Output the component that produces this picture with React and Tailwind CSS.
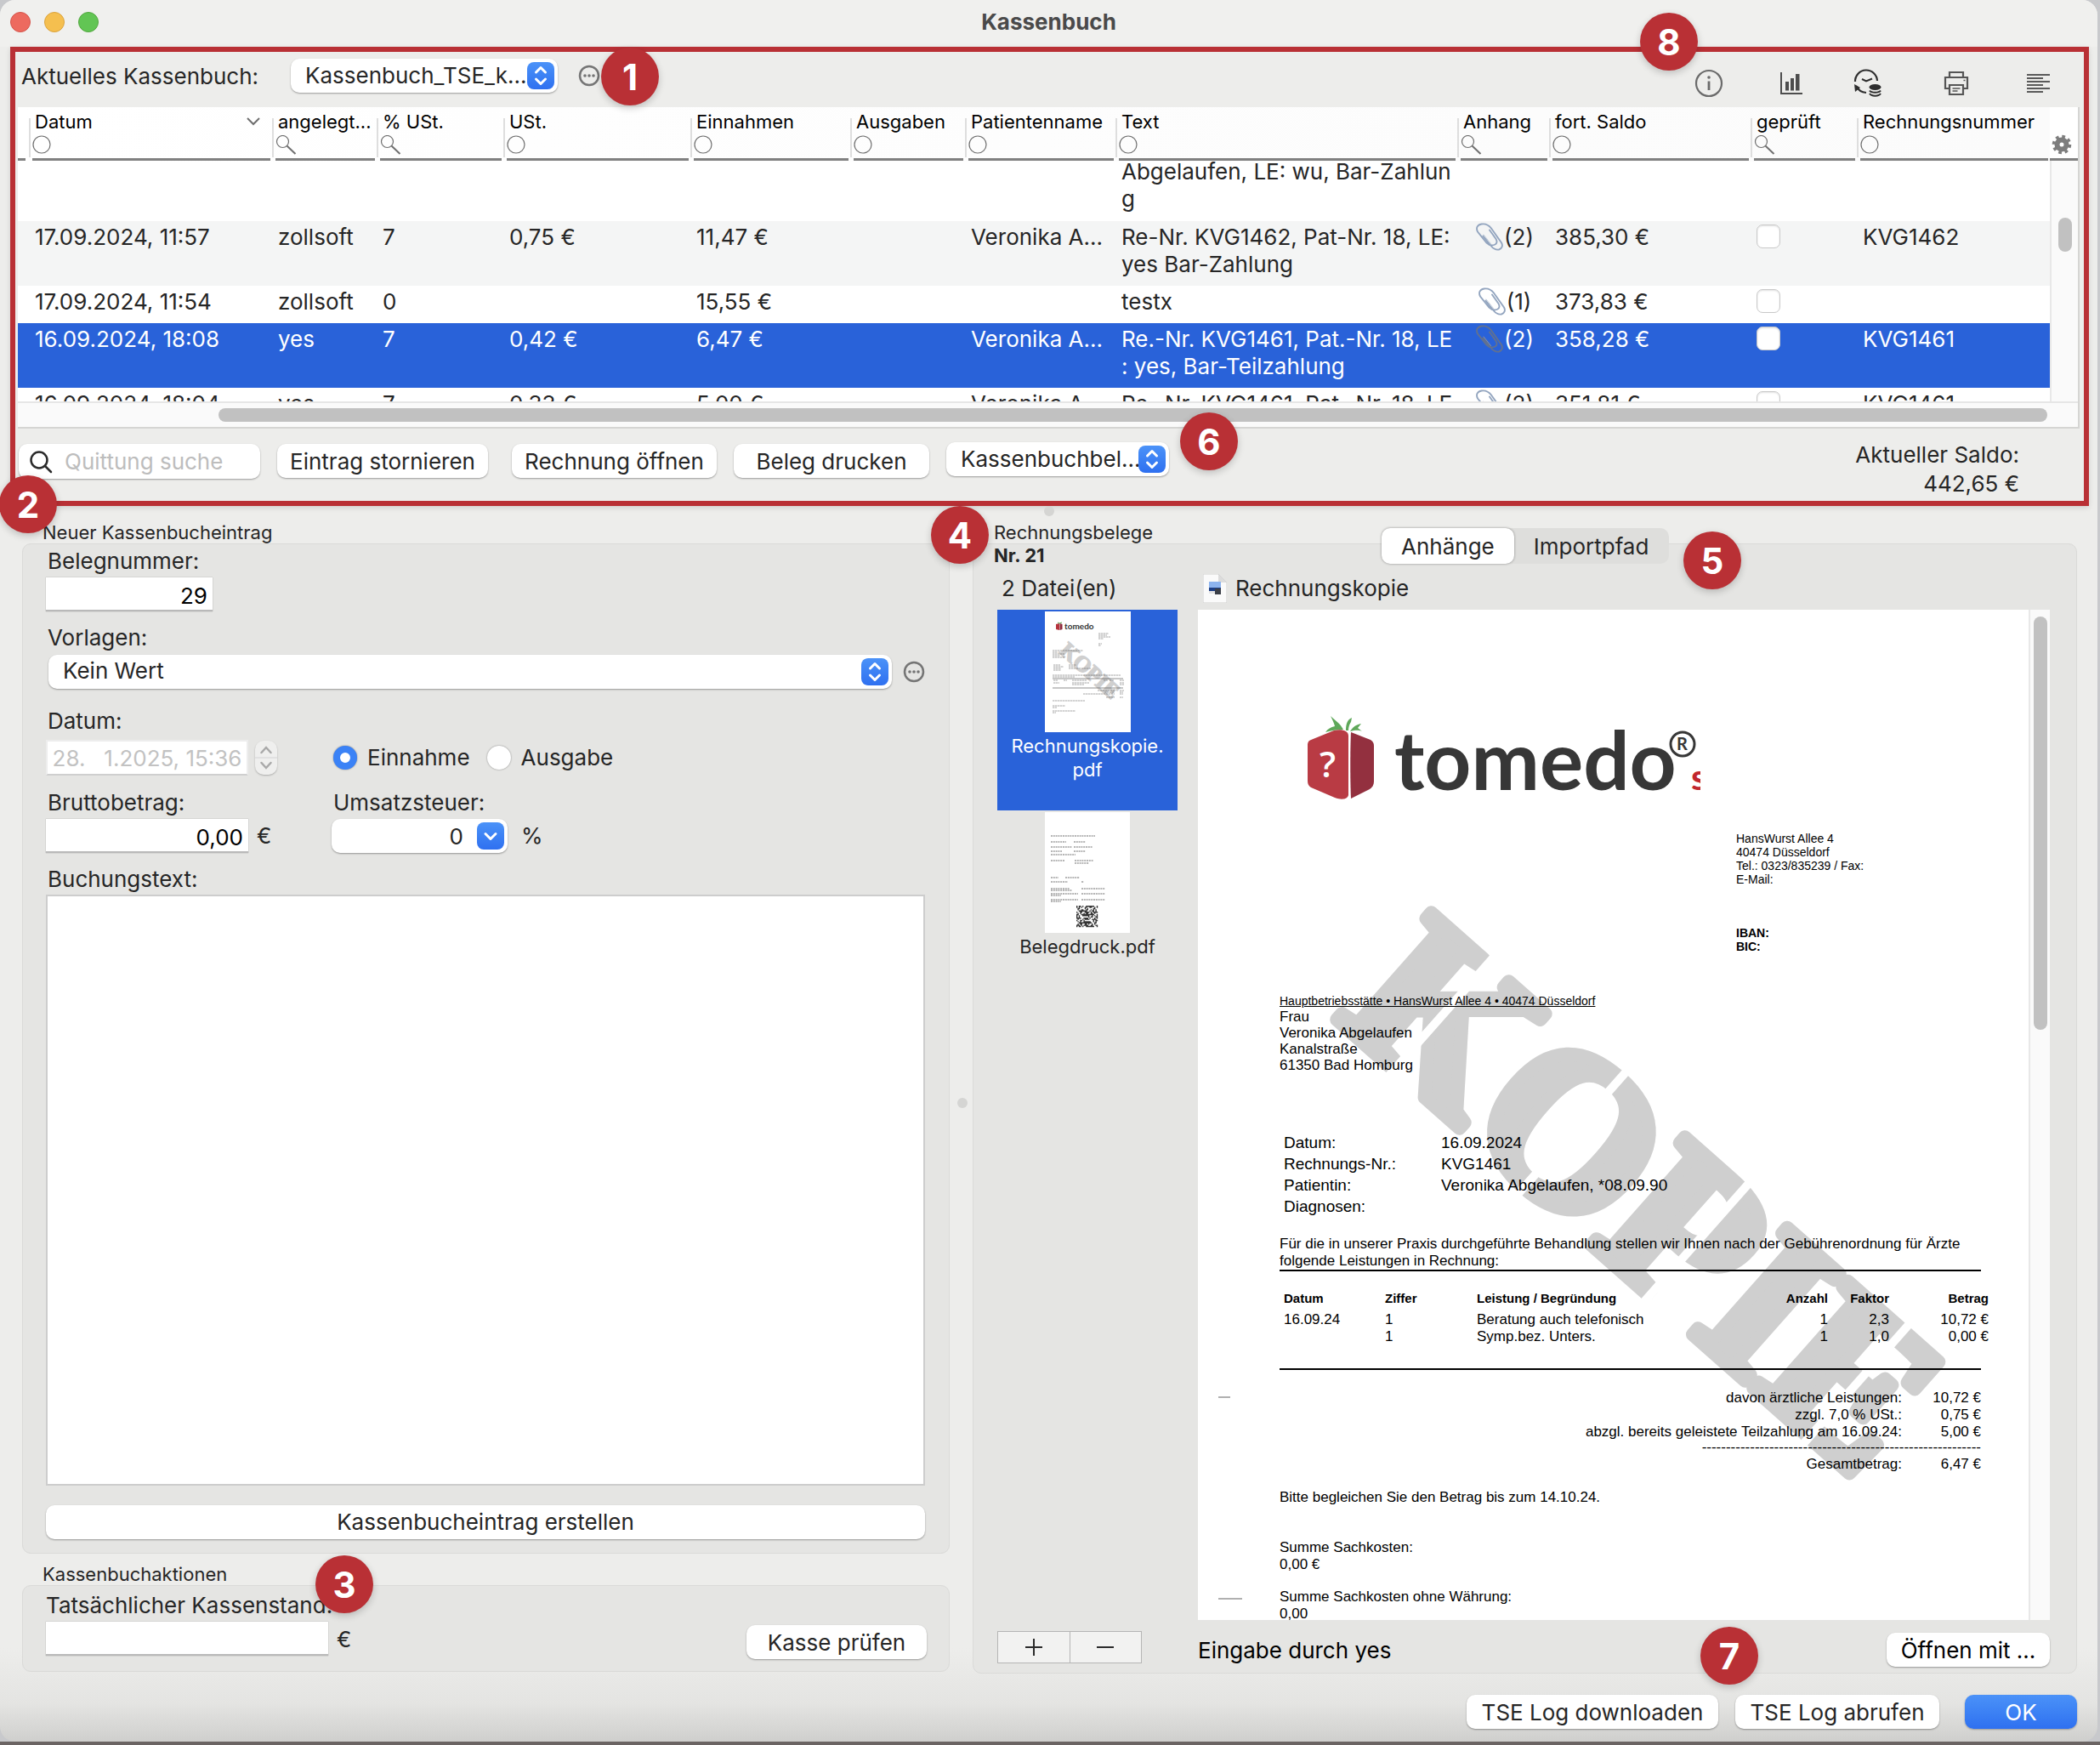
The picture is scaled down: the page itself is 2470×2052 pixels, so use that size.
import React, { useState } from 'react';
import clsx from 'clsx';

const COLUMNS = [
    { key: 'datum', label: 'Datum', width: 'w-[286px]', filter: 'circle', sorted: true },
    { key: 'angelegt', label: 'angelegt...', width: 'w-[123px]', filter: 'search' },
    { key: 'ustProzent', label: '% USt.', width: 'w-[149px]', filter: 'search' },
    { key: 'ust', label: 'USt.', width: 'w-[220px]', filter: 'circle' },
    { key: 'einnahmen', label: 'Einnahmen', width: 'w-[188px]', filter: 'circle' },
    { key: 'ausgaben', label: 'Ausgaben', width: 'w-[135px]', filter: 'circle' },
    { key: 'patient', label: 'Patientenname', width: 'w-[177px]', filter: 'circle' },
    { key: 'text', label: 'Text', width: '', filter: 'circle' },
    { key: 'anhang', label: 'Anhang', width: 'w-[108px]', filter: 'search' },
    { key: 'saldo', label: 'fort. Saldo', width: 'w-[237px]', filter: 'circle' },
    { key: 'geprueft', label: 'geprüft', width: 'w-[125px]', filter: 'search' },
    { key: 'rechnung', label: 'Rechnungsnummer', width: 'w-[227px]', filter: 'circle' },
];

const ENTRIES = [
    { id: 1, text: ['Abgelaufen, LE: wu, Bar-Zahlun', 'g'], height: 'h-[70px]', partial: true },
    { id: 2, datum: '17.09.2024, 11:57', angelegt: 'zollsoft', ustProzent: '7', ust: '0,75 €', einnahmen: '11,47 €', patient: 'Veronika A...', text: ['Re-Nr. KVG1462, Pat-Nr. 18, LE:', 'yes Bar-Zahlung'], anhang: 2, saldo: '385,30 €', rechnung: 'KVG1462', height: 'h-[76px]', striped: true },
    { id: 3, datum: '17.09.2024, 11:54', angelegt: 'zollsoft', ustProzent: '0', einnahmen: '15,55 €', text: ['testx'], anhang: 1, saldo: '373,83 €', height: 'h-[44px]' },
    { id: 4, datum: '16.09.2024, 18:08', angelegt: 'yes', ustProzent: '7', ust: '0,42 €', einnahmen: '6,47 €', patient: 'Veronika A...', text: ['Re.-Nr. KVG1461, Pat.-Nr. 18, LE', ': yes, Bar-Teilzahlung'], anhang: 2, saldo: '358,28 €', rechnung: 'KVG1461', height: 'h-[76px]', selected: true },
    { id: 5, datum: '16.09.2024, 18:04', angelegt: 'yes', ustProzent: '7', ust: '0,33 €', einnahmen: '5,00 €', patient: 'Veronika A...', text: ['Re.-Nr. KVG1461, Pat.-Nr. 18, LE'], anhang: 2, saldo: '351,81 €', rechnung: 'KVG1461', height: 'h-[44px]' },
];

const INVOICE_ITEMS = [
    { datum: '16.09.24', ziffer: '1', leistung: 'Beratung auch telefonisch', anzahl: '1', faktor: '2,3', betrag: '10,72 €' },
    { datum: '', ziffer: '1', leistung: 'Symp.bez. Unters.', anzahl: '1', faktor: '1,0', betrag: '0,00 €' },
];

const INVOICE_HEAD = [
    ['Datum:', '16.09.2024'],
    ['Rechnungs-Nr.:', 'KVG1461'],
    ['Patientin:', 'Veronika Abgelaufen, *08.09.90'],
    ['Diagnosen:', ''],
];

const INVOICE_SUMS = [
    ['davon ärztliche Leistungen:', '10,72 €'],
    ['zzgl. 7,0 % USt.:', '0,75 €'],
    ['abzgl. bereits geleistete Teilzahlung am 16.09.24:', '5,00 €'],
];

/* ---------- small building blocks ---------- */

function Marker({ n, className }) {
    return (
        <span className={clsx('absolute z-20 flex size-[68px] items-center justify-center rounded-full bg-[#b93035] text-[42px] font-bold text-white shadow-[0_3px_8px_rgba(0,0,0,0.2)]', className)}>
            {n}
        </span>
    );
}

function PushButton({ children, className }) {
    return (
        <button type="button" className={clsx('h-10 rounded-[10px] bg-white text-center shadow-[0_1px_2px_rgba(0,0,0,0.35)]', className)}>
            {children}
        </button>
    );
}

function BlueKnob({ down }) {
    return (
        <svg viewBox="0 0 32 32" className="pointer-events-none absolute top-1 right-1 size-8 rounded-[8px] bg-linear-to-b from-[#4b92f8] to-[#2f70f0]" fill="none" stroke="#fff" strokeWidth="3" strokeLinecap="round" strokeLinejoin="round">
            {down ? <path d="M10 13.5l6 6 6-6" /> : <path d="M10.500 12l5.500-5.500 5.500 5.500M10.500 20l5.500 5.500 5.500-5.500" />}
        </svg>
    );
}

function PopUp({ id, label, value, className }) {
    return (
        <span className={clsx('relative block h-10', className)}>
            <select id={id} aria-label={label} className="block h-full w-full appearance-none rounded-[10px] bg-white pb-0.5 pl-[17px] shadow-[0_1px_2px_rgba(0,0,0,0.35)]">
                <option>{value}</option>
            </select>
            <BlueKnob />
        </span>
    );
}

function MoreButton({ label }) {
    return (
        <button type="button" aria-label={label} className="size-[26px] shrink-0">
            <svg viewBox="0 0 26 26" className="size-full">
                <circle cx="13" cy="13" r="11" fill="none" stroke="#757575" strokeWidth="2.500" />
                <circle cx="8" cy="13" r="1.800" fill="#757575" />
                <circle cx="13" cy="13" r="1.800" fill="#757575" />
                <circle cx="18" cy="13" r="1.800" fill="#757575" />
            </svg>
        </button>
    );
}

function FilterIcon({ kind }) {
    return (
        <svg viewBox="0 0 26 24" className="mt-1 h-6 w-[26px]" fill="none" stroke="#6f6f6f">
            {kind === 'circle' ? (
                <circle cx="11" cy="11" r="10" strokeWidth="1.200" />
            ) : (
                <>
                    <circle cx="8.500" cy="7.500" r="7" strokeWidth="1.200" />
                    <path d="M13.500 12.500L23.500 22" strokeWidth="2" />
                </>
            )}
        </svg>
    );
}

function PaperClip({ dark }) {
    return (
        <svg viewBox="0 0 34 34" className="size-[34px] shrink-0" fill="none" stroke={dark ? '#62718f' : '#93a5bf'} strokeWidth="1.900" strokeLinecap="round">
            <path d="M9.500 15.500L19 27.500c2.500 3 5.500 4.500 9 4 3.500-1 5-4.500 3-8L19 6.500C16 2.500 12 .800 7.500 1.500 2.500 2.500.800 6 3 10.500l10.500 13c3 3 7 3.500 10 2 2.500-1.500 2.500-4 1-6.500L17 8.500" />
            <path d="M10 14l8.500 10.500" stroke={dark ? '#8b93a3' : '#c3cddb'} strokeWidth="1" />
        </svg>
    );
}

/* ---------- toolbar icons ---------- */

function InfoIcon() {
    return (
        <svg viewBox="0 0 34 34" className="size-[34px]" fill="none" stroke="#6b6b6b">
            <circle cx="17" cy="17" r="15" strokeWidth="2.200" />
            <path d="M17 14.500V25" strokeWidth="2.800" />
            <circle cx="17" cy="10" r="1.800" fill="#6b6b6b" stroke="none" />
        </svg>
    );
}

function ChartIcon() {
    return (
        <svg viewBox="0 0 28 28" className="size-7" fill="#4d4d4d">
            <path d="M1 1h2v24h24v2H1zM7 12h4v10.500H7zM13 8h4v14.500h-4zM19 3h4.500v19.500H19z" />
        </svg>
    );
}

function ClockCoinsIcon() {
    return (
        <svg viewBox="0 0 48 34" className="h-[34px] w-12" fill="none" stroke="#2e2e2e" strokeWidth="2.200">
            <path d="M2 15a13 13 0 0 1 26-1" />
            <path d="M3 20c2.500 5 6.500 7.500 12 8" />
            <path d="M1 18l1 9 6-5z" fill="#2e2e2e" stroke="none" />
            <path d="M10 12l5 2.500 7-3" strokeWidth="2" />
            <ellipse cx="25.500" cy="21.500" rx="7" ry="3.500" fill="#2e2e2e" stroke="none" />
            <path d="M19 25.500c2 3 11 3 13 0M19 29c2 3.500 11 3.500 13 0" strokeWidth="2" />
        </svg>
    );
}

function PrinterIcon() {
    return (
        <svg viewBox="0 0 30 30" className="size-[30px]" fill="none" stroke="#555" strokeWidth="2.200">
            <path d="M7 8V2h16v6M7 21H2V8h26v13h-5" />
            <path d="M7 17h16v11H7z" />
            <path d="M10.500 21h9M10.500 24h6" strokeWidth="1.400" />
            <path d="M23.500 11.500h2" strokeWidth="1.500" />
        </svg>
    );
}

function LinesIcon() {
    return (
        <svg viewBox="0 0 28 24" className="h-6 w-7" stroke="#5a5a5a" strokeWidth="1.800">
            <path d="M0 2h27M0 6h19M0 10h27M0 14h19M0 18h27M0 22h19" />
        </svg>
    );
}

const TOOLBAR = [
    { label: 'Info', icon: InfoIcon },
    { label: 'Statistik', icon: ChartIcon },
    { label: 'Kassenverlauf', icon: ClockCoinsIcon },
    { label: 'Drucken', icon: PrinterIcon },
    { label: 'Protokoll', icon: LinesIcon },
];

/* ---------- upper part: the cash book list ---------- */

function EntryCell({ column, entry }) {
    if (column.key === 'text') {
        return (
            <div className={clsx(entry.partial && '-mt-1')}>
                {entry.text.map((line) => <div key={line}>{line}</div>)}
            </div>
        );
    }
    if (column.key === 'anhang') {
        return entry.anhang ? (
            <div className="flex h-8 items-center justify-center pr-1">
                <PaperClip dark={entry.selected} />
                <span>({entry.anhang})</span>
            </div>
        ) : null;
    }
    if (column.key === 'geprueft') {
        return entry.partial ? null : (
            <input type="checkbox" aria-label={`geprüft ${entry.datum}`} className="mt-px block size-7 appearance-none rounded-[7px] border border-[#c9c9c9] bg-white shadow-[inset_0_1px_2px_rgba(0,0,0,0.12)] checked:bg-[#2f70f0]" />
        );
    }
    return entry[column.key] || null;
}

function EntryTable() {
    return (
        <div className="mr-[5px] ml-[3px] flex h-[378px] flex-col border-r-2 border-b-2 border-[#d5d5d3] bg-white">
            <div className="flex h-[346px]">
                <div className="min-w-0 flex-1 overflow-hidden">
                    <table className="w-full table-fixed border-collapse whitespace-nowrap">
                        <thead>
                            <tr className="h-16 bg-linear-to-r from-white to-[#fbfbfb] text-left text-black">
                                <th className="w-[13px] p-0 align-top" aria-label="Status">
                                    <div className="mr-1 h-[63px] border-b-[3px] border-[#808080]" />
                                </th>
                                {COLUMNS.map((column) => (
                                    <th key={column.key} className={clsx('relative p-0 align-top text-[22px] font-normal before:absolute before:top-[13px] before:left-0 before:h-[46px] before:w-0.5 before:bg-[#dedede]', column.width)}>
                                        <div className="mr-0.5 ml-1 h-[63px] border-b-[3px] border-[#808080] pt-[5px]">
                                            <div className="flex items-center justify-between pl-[3px] leading-6">
                                                {column.label}
                                                {column.sorted && (
                                                    <svg viewBox="0 0 16 10" className="mr-3 h-2.5 w-4" fill="none" stroke="#6f6f6f" strokeWidth="2">
                                                        <path d="M1 1l7 7 7-7" />
                                                    </svg>
                                                )}
                                            </div>
                                            <FilterIcon kind={column.filter} />
                                        </div>
                                    </th>
                                ))}
                            </tr>
                        </thead>
                        <tbody>
                            {ENTRIES.map((entry) => (
                                <tr key={entry.id} className={clsx('leading-8', entry.height, entry.striped && 'bg-[#f4f5f5]', entry.selected && 'bg-[#2962d9] text-white')}>
                                    <td className="p-0" />
                                    {COLUMNS.map((column) => (
                                        <td key={column.key} className={clsx('p-0 pl-[7px] align-top', entry.partial ? 'pt-0' : 'pt-[3px]')}>
                                            <EntryCell column={column} entry={entry} />
                                        </td>
                                    ))}
                                </tr>
                            ))}
                        </tbody>
                    </table>
                </div>
                <div className="flex w-[33px] flex-col">
                    <button type="button" aria-label="Spalten" className="flex h-[63px] items-end justify-center border-b-[3px] border-[#808080] pr-1.5 pb-1">
                        <svg viewBox="0 0 24 24" className="size-6" fill="none" stroke="#7d7d7d">
                            <circle cx="12" cy="12" r="5.500" strokeWidth="6" />
                            <circle cx="12" cy="12" r="9.500" strokeWidth="3.500" strokeDasharray="3.700 3.760" />
                        </svg>
                    </button>
                    <div className="flex-1 border-l-2 border-[#e8e8e8] bg-[#fafafa] pt-[67px]">
                        <div className="mx-auto h-10 w-4 rounded-full bg-[#c1c1c1]" />
                    </div>
                </div>
            </div>
            <div className="flex-1 border-t-2 border-[#e6e6e6] bg-[#fafafa] pt-1.5 pr-9 pl-[236px]">
                <div className="h-4 rounded-full bg-[#c1c1c1]" />
            </div>
        </div>
    );
}

function CashBookSection() {
    return (
        <section className="relative mr-[10px] ml-3 h-[540px] border-[6px] border-[#b93035] shadow-[0_2px_6px_rgba(0,0,0,0.12)]">
            <div className="flex h-[65px] items-start justify-between">
                <div className="flex items-center gap-6 pt-2 pl-[7px]">
                    <label className="w-[293px]" htmlFor="kassenbuch">Aktuelles Kassenbuch:</label>
                    <PopUp id="kassenbuch" value="Kassenbuch_TSE_k..." className="w-[314px]" />
                    <MoreButton label="Kassenbuch verwalten" />
                </div>
                <div className="flex gap-[30px] pt-1 pr-5">
                    {TOOLBAR.map(({ label, icon: Icon }) => (
                        <button key={label} type="button" aria-label={label} className="flex h-[66px] w-[67px] items-center justify-center">
                            <Icon />
                        </button>
                    ))}
                </div>
            </div>
            <EntryTable />
            <div className="flex items-start pt-[18px] pr-[76px] pl-1">
                <label className="flex h-[41px] w-[284px] items-center rounded-[10px] bg-white pl-3 shadow-[0_1px_2px_rgba(0,0,0,0.35)]">
                    <svg viewBox="0 0 28 28" className="size-7 shrink-0" fill="none" stroke="#2b2b2b" strokeWidth="2.500" strokeLinecap="round">
                        <circle cx="12" cy="12" r="9.500" />
                        <path d="M19 19l7 7" />
                    </svg>
                    <input type="search" aria-label="Quittung suche" placeholder="Quittung suche" className="ml-3.5 w-full min-w-0 bg-transparent outline-none placeholder:text-[#bdbdbd]" />
                </label>
                <PushButton className="ml-5 w-[248px]">Eintrag stornieren</PushButton>
                <PushButton className="ml-7 w-[241px]">Rechnung öffnen</PushButton>
                <PushButton className="ml-5 w-[230px]">Beleg drucken</PushButton>
                <PopUp label="Belegart" value="Kassenbuchbel..." className="-mt-0.5 ml-5 w-[262px]" />
                <div className="-mt-1 ml-auto text-right leading-[34px]">
                    Aktueller Saldo:
                    <br />
                    442,65 €
                </div>
            </div>
            <Marker n={1} className="-top-[5px] left-[689px]" />
            <Marker n={8} className="-top-[46px] right-[454px]" />
            <Marker n={6} className="top-[424px] left-[1370px]" />
            <Marker n={2} className="top-[498px] -left-[19px]" />
        </section>
    );
}

/* ---------- lower left: new entry form ---------- */

const FIELD = 'h-10 border-b-2 border-[#b9b9b9] bg-white pt-1 pr-1.5 text-right text-black shadow-[0_0_1px_rgba(0,0,0,0.4)] outline-none';

function NewEntryForm() {
    const [kind, setKind] = useState('Einnahme');

    return (
        <form className="flex min-h-0 flex-1 flex-col rounded-[10px] border border-[#dadad8] bg-[#e5e5e3] pt-[5px] pr-7 pb-4 pl-[27px] leading-[30px]">
            <label htmlFor="beleg" className="pl-0.5">Belegnummer:</label>
            <input id="beleg" defaultValue="29" className={clsx(FIELD, 'mt-1 w-[196px]')} />

            <label htmlFor="vorlagen" className="mt-4 pl-0.5">Vorlagen:</label>
            <div className="mt-[5px] flex items-center gap-[13px] pl-[3px]">
                <PopUp id="vorlagen" value="Kein Wert" className="min-w-0 flex-1" />
                <MoreButton label="Vorlagen verwalten" />
            </div>

            <label htmlFor="datum" className="mt-[23px] pl-0.5">Datum:</label>
            <div className="mt-[7px] flex items-center">
                <input id="datum" disabled defaultValue="28.   1.2025, 15:36" className="h-[42px] w-[238px] border-2 border-[#ededed] border-b-[#cfcfcf] bg-white text-center whitespace-pre text-[#c2c2c2]" />
                <button type="button" disabled aria-label="Datum ändern" className="ml-2 h-10 w-[26px] rounded-[10px] bg-[#efefee] shadow-[0_1px_2px_rgba(0,0,0,0.25)]">
                    <svg viewBox="0 0 26 40" className="size-full" fill="none" stroke="#a9a9a9" strokeWidth="2.500" strokeLinecap="round">
                        <path d="M7.500 14l5.500-6 5.500 6M7.500 26l5.500 6 5.500-6" />
                        <path d="M0 20h26" stroke="#dcdcdc" strokeWidth="1.500" />
                    </svg>
                </button>
                <div className="ml-[66px] flex gap-5">
                    {['Einnahme', 'Ausgabe'].map((name) => (
                        <label key={name} className="flex items-center gap-3">
                            <input
                                type="radio"
                                name="art"
                                checked={kind === name}
                                onChange={() => setKind(name)}
                                className="size-7 appearance-none rounded-full bg-white shadow-[0_0_2px_rgba(0,0,0,0.45)] checked:border-8 checked:border-[#3b82f6]"
                            />
                            {name}
                        </label>
                    ))}
                </div>
            </div>

            <div className="mt-[17px] flex">
                <div className="flex w-[336px] flex-col">
                    <label htmlFor="brutto" className="pl-0.5">Bruttobetrag:</label>
                    <div className="mt-1 flex items-center gap-2.5">
                        <input id="brutto" defaultValue="0,00" className={clsx(FIELD, 'w-[238px]')} />€
                    </div>
                </div>
                <div className="flex flex-col">
                    <label htmlFor="ust" className="pl-0.5">Umsatzsteuer:</label>
                    <div className="mt-1 flex items-center gap-4">
                        <span className="relative block">
                            <input id="ust" defaultValue="0" className="h-10 w-[207px] rounded-[10px] bg-white pr-[52px] text-right shadow-[0_1px_2px_rgba(0,0,0,0.35)]" />
                            <BlueKnob down />
                        </span>
                        %
                    </div>
                </div>
            </div>

            <label htmlFor="text" className="mt-4 pl-0.5">Buchungstext:</label>
            <textarea id="text" className="mt-[3px] min-h-0 flex-1 resize-none border-2 border-[#cdcdcd] bg-white outline-none" />
            <PushButton className="mt-[23px] shrink-0">Kassenbucheintrag erstellen</PushButton>
        </form>
    );
}

function CashActions() {
    return (
        <form className="relative flex items-end justify-between rounded-[10px] border border-[#dadad8] bg-[#e5e5e3] pt-2 pr-[26px] pb-3.5 pl-[27px]">
            <div className="flex flex-col pb-1">
                <label htmlFor="stand" className="leading-[30px]">Tatsächlicher Kassenstand:</label>
                <div className="mt-1 flex items-center gap-2.5">
                    <input id="stand" className={clsx(FIELD, 'w-[332px]')} />€
                </div>
            </div>
            <PushButton className="w-[212px]">Kasse prüfen</PushButton>
            <Marker n={3} className="-top-[36px] left-[344px]" />
        </form>
    );
}

/* ---------- lower right: attachments ---------- */

// text lines of the first thumbnail: [x, y, width]
const THUMB_LINES = [
    [63, 26, 12], [63, 28, 10], [63, 30, 14], [63, 32, 6], [63, 38, 4], [63, 40, 3],
    [9, 46, 36], [9, 48, 6], [9, 50, 14], [9, 52, 9], [9, 54, 14],
    [10, 63, 8], [28, 63, 9], [10, 65, 12], [28, 65, 7], [10, 67, 9], [28, 67, 26], [10, 69, 9],
    [9, 75, 80], [9, 77, 26], [10, 81, 5], [22, 81, 4], [32, 81, 17], [69, 81, 5], [76, 81, 5], [88, 81, 5],
    [10, 84, 7], [32, 84, 20], [88, 84, 5], [32, 86, 14], [88, 86, 5],
    [62, 93, 20], [88, 93, 5], [70, 95, 12], [88, 95, 4], [45, 97, 37], [88, 97, 4], [72, 101, 10], [88, 101, 4],
    [9, 105, 38], [9, 111, 15], [9, 113, 5], [9, 117, 27], [9, 119, 4],
];

function InvoiceThumb() {
    return (
        <svg viewBox="0 0 101 142" className="h-[142px] w-[101px] bg-white">
            <path d="M13 15l4-1v8l-4-1z" fill="#b5333c" />
            <path d="M17.500 14l3 1v6l-3 1z" fill="#8e2a3c" />
            <path d="M15 13l2 1 3-1" stroke="#5fa85a" fill="none" />
            <text x="23" y="21" fontFamily="Lato" fontWeight="700" fontSize="10" fill="#333">tomedo</text>
            <text transform="translate(16 48) rotate(42)" fontFamily="Liberation Serif" fontWeight="700" fontSize="26" fill="#cfcfcf" stroke="#cfcfcf" strokeWidth="1.500">KOPIE</text>
            {THUMB_LINES.map(([x, y, w]) => (
                <path key={`${x}-${y}`} d={`M${x} ${y}h${w}`} stroke="#555" strokeWidth=".8" strokeDasharray="2.500 .5" opacity=".65" />
            ))}
            <path d="M9 79h83M9 90h83" stroke="#444" strokeWidth=".6" />
        </svg>
    );
}

const RECEIPT_LINES = [
    [7, 28, 52], [7, 35, 18], [34, 35, 14], [7, 41, 25], [34, 41, 22], [7, 46, 13], [34, 46, 14], [7, 50, 29],
    [7, 57, 16], [35, 57, 22], [35, 60, 17], [7, 77, 9], [24, 77, 17], [7, 82, 20], [43, 82, 3],
    [7, 90, 22], [43, 90, 28], [7, 92, 25], [7, 96, 32], [43, 96, 28], [7, 98, 12], [7, 103, 32], [43, 103, 28], [7, 105, 12],
];

function ReceiptThumb() {
    // QR block under the receipt text
    const cells = [];
    for (let row = 0; row < 18; row++) {
        for (let col = 0; col < 18; col++) {
            if ((row * row * 7 + col * col * 13 + row * col * 5 + col * 3) % 17 < 10) cells.push(`M${37 + col * 1.4} ${110 + row * 1.4}h1.4v1.4h-1.4z`);
        }
    }
    return (
        <svg viewBox="0 0 100 142" className="h-[142px] w-[100px] bg-white">
            {RECEIPT_LINES.map(([x, y, w]) => (
                <path key={`${x}-${y}`} d={`M${x} ${y}h${w}`} stroke="#333" strokeWidth="1.100" strokeDasharray="2 .8" opacity=".7" />
            ))}
            <path d={cells.join('')} fill="#333" />
        </svg>
    );
}

function TomedoLogo() {
    return (
        <svg viewBox="0 0 462 102" className="ml-[33px] block h-[102px] w-[462px]">
            <path d="M27 2c5 5 11 8 15 16-8 0-14 1-21 3 3-4 6-6 11-7-1-4-3-8-5-12zM45 19c0-8 2-13 7-15l-1 5c-2 3-3 6-3 10zM50 20c3-5 7-8 13-9l-4 5 5 4c-5-2-9-1-14 0z" fill="#5fa85a" />
            <path d="M4 30L31 19c9-2 17 0 17 6v70c-1 5-8 6-16 3L4 86c-3-2-4-4-4-8V37c0-4 1-6 4-7z" fill="#b93b44" />
            <path d="M51 21l23 9c3 2 4 4 4 7v42c0 4-2 7-5 9l-22 11c-1-20-1-60 0-78z" fill="#93303f" />
            <text x="14" y="74" fontFamily="Open Sans" fontWeight="600" fontSize="42" fill="#fff">?</text>
            <text x="102" y="89" fontFamily="Lato" fontWeight="700" fontSize="96" fill="#373737">tomedo</text>
            <circle cx="441" cy="35" r="14" fill="none" stroke="#373737" strokeWidth="3" />
            <text x="434" y="42" fontFamily="Lato" fontWeight="700" fontSize="20" fill="#373737">R</text>
            <text x="451" y="89" fontFamily="Lato" fontWeight="700" fontSize="42" fill="#c1272d">s</text>
        </svg>
    );
}

function Watermark() {
    return (
        <svg viewBox="0 0 977 1189" className="absolute top-0 left-0 h-[1189px] w-[977px]">
            <g transform="translate(160 479) rotate(41.5)">
                <text fontFamily="Liberation Serif" fontWeight="700" fontSize="256" fill="#cfcfcf" stroke="#cfcfcf" strokeWidth="16" strokeLinejoin="round">KOPIE</text>
                {/* stencil bridges */}
                <path d="M94-190V20M300-190v210M495-190v210M746-190V20" stroke="#fff" strokeWidth="10" fill="none" />
            </g>
        </svg>
    );
}

function InvoicePage() {
    return (
        <article className="relative min-w-0 flex-1 overflow-hidden bg-white pt-[123px] pr-14 pl-24 font-['Liberation_Sans',Arial,sans-serif] text-[17px] leading-5 text-black">
            <Watermark />
            <div className="relative">
                <TomedoLogo />
                <div className="mt-9 ml-[537px] text-[14px] leading-4">
                    HansWurst Allee 4<br />
                    40474 Düsseldorf<br />
                    Tel.: 0323/835239 / Fax:<br />
                    E-Mail:
                    <div className="mt-[47px] font-bold">
                        IBAN:<br />
                        BIC:
                    </div>
                </div>
                <div className="mt-12 text-[14px] leading-4 underline">Hauptbetriebsstätte • HansWurst Allee 4 • 40474 Düsseldorf</div>
                <div className="mt-px leading-[19px]">
                    Frau<br />
                    Veronika Abgelaufen<br />
                    Kanalstraße<br />
                    61350 Bad Homburg
                </div>
                <dl className="mt-[69px] grid grid-cols-[185px_1fr] pl-[5px] text-[19px] leading-[25px]">
                    {INVOICE_HEAD.map(([name, value]) => (
                        <React.Fragment key={name}>
                            <dt>{name}</dt>
                            <dd>{value}</dd>
                        </React.Fragment>
                    ))}
                </dl>
                <p className="mt-[22px] border-b-2 border-black">
                    Für die in unserer Praxis durchgeführte Behandlung stellen wir Ihnen nach der Gebührenordnung für Ärzte<br />
                    folgende Leistungen in Rechnung:
                </p>
                <div className="mt-[22px] -mr-[9px]">
                    <table className="w-full table-fixed text-left">
                        <thead>
                            <tr className="h-[25px] align-top text-[15px]">
                                <th className="w-[124px] p-0 pl-[5px]">Datum</th>
                                <th className="w-[108px] p-0">Ziffer</th>
                                <th className="p-0">Leistung / Begründung</th>
                                <th className="w-[72px] p-0 text-right">Anzahl</th>
                                <th className="w-[72px] p-0 text-right">Faktor</th>
                                <th className="w-[117px] p-0 text-right">Betrag</th>
                            </tr>
                        </thead>
                        <tbody>
                            {INVOICE_ITEMS.map((item) => (
                                <tr key={item.leistung}>
                                    <td className="p-0 pl-[5px]">{item.datum}</td>
                                    <td className="p-0">{item.ziffer}</td>
                                    <td className="p-0">{item.leistung}</td>
                                    <td className="p-0 text-right">{item.anzahl}</td>
                                    <td className="p-0 text-right">{item.faktor}</td>
                                    <td className="p-0 text-right">{item.betrag}</td>
                                </tr>
                            ))}
                        </tbody>
                    </table>
                </div>
                <hr className="mt-[27px] border-t-2 border-black" />
                <div className="mt-[23px] grid grid-cols-[1fr_93px] text-right">
                    {INVOICE_SUMS.map(([name, value]) => (
                        <React.Fragment key={name}>
                            <span>{name}</span>
                            <span>{value}</span>
                        </React.Fragment>
                    ))}
                    <span className="col-span-2 h-[18px] leading-4">{'-'.repeat(58)}</span>
                    <span>Gesamtbetrag:</span>
                    <span>6,47 €</span>
                </div>
                <p className="mt-[19px]">Bitte begleichen Sie den Betrag bis zum 14.10.24.</p>
                <p className="mt-[39px]">Summe Sachkosten:<br />0,00 €</p>
                <p className="mt-[18px]">Summe Sachkosten ohne Währung:<br />0,00</p>
            </div>
            {/* fold marks */}
            <span className="absolute top-[925px] left-6 h-0.5 w-3.5 bg-[#b0b0b0]" />
            <span className="absolute top-[1162px] left-6 h-0.5 w-7 bg-[#b0b0b0]" />
        </article>
    );
}

function FileList() {
    return (
        <div className="flex w-[212px] shrink-0 flex-col">
            <div className="mb-2.5 pl-[5px] leading-[30px]">2 Datei(en)</div>
            <ul className="flex-1 text-center text-[22px] leading-7">
                <li className="flex h-[236px] flex-col items-center bg-[#2962d9] pt-0.5 text-white">
                    <InvoiceThumb />
                    <span className="mt-0.5">Rechnungskopie.<br />pdf</span>
                </li>
                <li className="flex flex-col items-center pt-0.5">
                    <ReceiptThumb />
                    <span className="mt-0.5">Belegdruck.pdf</span>
                </li>
            </ul>
            <div className="mb-1 flex h-[38px] w-[170px] border border-[#b5b5b5] bg-[#f2f2f1]">
                {[['Hinzufügen', 'M1 11h20M11 1v20'], ['Entfernen', 'M1 11h20']].map(([label, d]) => (
                    <button key={label} type="button" aria-label={label} className="flex flex-1 items-center justify-center first:border-r first:border-[#b5b5b5]">
                        <svg viewBox="0 0 22 22" className="size-[22px]" stroke="#2b2b2b" strokeWidth="2"><path d={d} /></svg>
                    </button>
                ))}
            </div>
        </div>
    );
}

function Attachments() {
    const [tab, setTab] = useState('Anhänge');

    return (
        <div className="relative flex min-h-0 flex-1 flex-col rounded-[10px] border border-[#dadad8] bg-[#e5e5e3] pt-px pr-[31px] pb-[7px] pl-7">
            <div className="-ml-1 text-[22px] leading-6 font-bold">Nr. 21</div>
            <div className="absolute -top-[19px] left-[480px] flex h-[42px] w-[338px] rounded-[10px] bg-[#dededc]">
                {['Anhänge', 'Importpfad'].map((name) => (
                    <button key={name} type="button" onClick={() => setTab(name)} className={clsx('h-full rounded-[10px] px-[23px]', tab === name && 'bg-white shadow-[0_0_3px_rgba(0,0,0,0.4)]')}>
                        {name}
                    </button>
                ))}
            </div>
            <div className="mt-3 flex min-h-0 flex-1 gap-6">
                <FileList />
                <div className="flex min-w-0 flex-1 flex-col">
                    <div className="mb-2.5 flex items-center gap-2.5 pl-1.5 leading-[30px]">
                        <svg viewBox="0 0 28 34" className="-my-0.5 h-[34px] w-7">
                            <path d="M0 0h18l10 10v24H0z" fill="#fafafa" stroke="#cfcfcf" />
                            <path d="M18 0v10h10z" fill="#dcdcdc" />
                            <path d="M7 9h14v10H7z" fill="#8db4ef" />
                            <path d="M7 16h14v4H7z" fill="#1d3f86" />
                            <path d="M7 20h14v3H7z" fill="#e3e3e3" />
                            <path d="M14 17h7v7h-7z" fill="#3b3f48" />
                        </svg>
                        Rechnungskopie
                    </div>
                    <div className="flex min-h-0 flex-1">
                        <InvoicePage />
                        <div className="w-[25px] border-l-2 border-[#e8e8e8] bg-[#fafafa] pt-2">
                            <div className="mx-auto h-[486px] w-4 rounded-full bg-[#c1c1c1]" />
                        </div>
                    </div>
                    <div className="mt-[15px] flex items-center justify-between text-black">
                        Eingabe durch yes
                        <PushButton className="w-[192px]">Öffnen mit ...</PushButton>
                    </div>
                </div>
            </div>
            <Marker n={5} className="-top-[15px] left-[835px]" />
            <Marker n={7} className="right-[374px] -bottom-[14px]" />
        </div>
    );
}

function App() {
    return (
        <div className="flex h-screen flex-col bg-[linear-gradient(to_top,#6b6463_4px,#c8c9cc_4px)] pr-[3px] pb-1 font-['Inter','Liberation_Sans',sans-serif] text-[26px] text-[#262626]">
            <div className="relative flex min-h-0 flex-1 flex-col rounded-[18px] bg-[linear-gradient(to_top,#cfcfcd,#e4e4e2_45px,#ededeb_110px)]">
                <header className="relative flex h-[55px] items-center justify-center rounded-t-[18px] bg-[#f0f0ee] pb-1 font-bold text-[#4a4a4a]">
                    <div className="absolute left-3 flex gap-4">
                        <button type="button" aria-label="Schließen" className="size-6 rounded-full border border-[#d5544b] bg-[#ed6a5f]" />
                        <button type="button" aria-label="Minimieren" className="size-6 rounded-full border border-[#dba33c] bg-[#f5bf4f]" />
                        <button type="button" aria-label="Zoomen" className="size-6 rounded-full border border-[#53a73f] bg-[#62c554]" />
                    </div>
                    Kassenbuch
                </header>

                <CashBookSection />

                <main className="relative flex min-h-0 flex-1 gap-[27px] pt-[18px] pr-6 pl-[26px]">
                    <span className="absolute top-0 left-1/2 size-3 -translate-x-1/2 rounded-full bg-[#d5d5d3]" />
                    <div className="flex min-w-0 flex-[1091] flex-col pb-0.5">
                        <h2 className="pl-6 text-[22px] leading-[26px]">Neuer Kassenbucheintrag</h2>
                        <NewEntryForm />
                        <h2 className="mt-[11px] pl-6 text-[22px] leading-[26px]">Kassenbuchaktionen</h2>
                        <CashActions />
                    </div>
                    <div className="relative flex min-w-0 flex-[1299] flex-col">
                        <h2 className="pl-[25px] text-[22px] leading-[26px]">Rechnungsbelege</h2>
                        <Attachments />
                        <span className="absolute top-1/2 -left-[18px] size-3 rounded-full bg-[#d5d5d3]" />
                        <Marker n={4} className="-top-[18px] -left-[49px]" />
                    </div>
                </main>

                <footer className="flex justify-end pt-[25px] pr-6 pb-[15px]">
                    <PushButton className="w-[296px]">TSE Log downloaden</PushButton>
                    <PushButton className="ml-5 w-[240px]">TSE Log abrufen</PushButton>
                    <button type="button" className="ml-[30px] h-10 w-[132px] rounded-[10px] bg-linear-to-b from-[#4b92f8] to-[#2f70f0] text-white shadow-[0_1px_2px_rgba(0,0,0,0.3)]">OK</button>
                </footer>
            </div>
        </div>
    );
}

export default App;
